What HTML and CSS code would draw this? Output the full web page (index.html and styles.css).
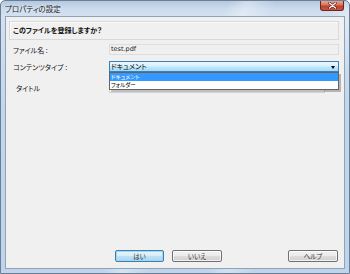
FILE: index.html
```html
<!DOCTYPE html>
<html lang="ja">
<head>
<meta charset="utf-8">
<link rel="stylesheet" href="styles.css">
</head>
<body>
<div class="window">
  <div class="titlebar">
    <span class="title">プロパティの設定</span>
    <span class="close"><svg width="9" height="7" viewBox="0 0 9 7"><path d="M1.5 1 L7.5 6 M7.5 1 L1.5 6" stroke="#5a1a10" stroke-width="2.4" stroke-linecap="round"/><path d="M1.5 1 L7.5 6 M7.5 1 L1.5 6" stroke="#ffffff" stroke-width="1.2" stroke-linecap="round"/></svg></span>
  </div>
  <div class="client">
    <div class="header">このファイルを登録しますか？</div>
    <div class="row row-file">
      <div class="label">ファイル名 :</div>
      <div class="field readonly">test.pdf</div>
    </div>
    <div class="row row-type">
      <div class="label">コンテンツタイプ :</div>
      <div class="field select">
        <span class="select-text">ドキュメント</span>
        <span class="arrow"></span>
        <div class="list">
          <div class="item selected">ドキュメント</div>
          <div class="item">フォルダー</div>
        </div>
      </div>
    </div>
    <div class="row row-title">
      <div class="label indent">タイトル</div>
      <div class="field input"></div>
    </div>
    <div class="spacer"></div>
    <div class="buttons">
      <button class="btn default">はい</button>
      <button class="btn">いいえ</button>
      <button class="btn help">ヘルプ</button>
    </div>
  </div>
</div>
</body>
</html>
```

FILE: styles.css
```css
* { box-sizing: border-box; }
html, body {
  margin: 0;
  padding: 0;
  width: 350px;
  height: 274px;
  overflow: hidden;
  background: #ffffff;
}
body {
  font-family: "Noto Sans CJK JP", "Noto Sans", sans-serif;
  font-feature-settings: "palt";
  font-size: 7px;
  color: #111;
}
.window {
  width: 350px;
  height: 274px;
  display: flex;
  flex-direction: column;
  border: 1px solid #6a7f96;
  border-radius: 5px 5px 0 0;
  background:
    linear-gradient(115deg, rgba(255,255,255,0) 0%, rgba(255,255,255,0) 48%, rgba(255,255,255,0.35) 52%, rgba(255,255,255,0) 58%, rgba(255,255,255,0) 70%, rgba(255,255,255,0.3) 74%, rgba(255,255,255,0) 80%),
    linear-gradient(to bottom, #b3c8de 0px, #cddcee 8px, #d3e1f1 16px, #c3d6eb 40%, #bfd4ea 100%);
}
.titlebar {
  height: 15px;
  display: flex;
  align-items: flex-start;
  padding-left: 4px;
  padding-right: 5px;
}
.title {
  font-size: 7.5px;
  line-height: 15px;
  color: #1a1a1a;
  text-shadow: 0 0 3px rgba(255,255,255,0.9);
}
.close {
  margin-left: auto;
  width: 24px;
  height: 10px;
  border: 1px solid #6e2418;
  border-top: none;
  border-radius: 0 0 3px 3px;
  background: linear-gradient(to bottom, #e5a593 0%, #d8735d 45%, #c0402b 55%, #c8563e 100%);
  display: flex;
  align-items: center;
  justify-content: center;
}
.close svg { display: block; }
.client {
  flex: 1;
  margin: 0 4px 4px 4px;
  border: 1px solid #8ea2b8;
  background: #f0f0f0;
  display: flex;
  flex-direction: column;
}
.header {
  margin: 4px 5px 0 3px;
  height: 19px;
  border: 1px solid #d9d9d9;
  box-shadow: inset 1px 1px 0 #fafafa;
  background: #f0f0f0;
  font-weight: bold;
  font-size: 7px;
  line-height: 17px;
  padding-left: 3px;
}
.row {
  display: flex;
  align-items: center;
  padding-left: 7px;
  padding-right: 5px;
}
.label {
  width: 96px;
  flex: none;
  line-height: 10px;
}
.label.indent { padding-left: 3px; }
.field {
  flex: 1;
  position: relative;
}
.row-file { margin-top: 4px; }
.row-type { margin-top: 6px; position: relative; z-index: 2; }
.row-title { margin-top: 11px; }
.readonly {
  height: 11px;
  border: 1px solid #dddddd;
  background: #f0f0f0;
  font-family: "DejaVu Sans", sans-serif;
  font-size: 6.5px;
  line-height: 9px;
  padding-left: 1px;
  color: #222;
}
.select {
  height: 11px;
  border: 1px solid #3c7fb1;
  background: linear-gradient(to bottom, #eaf6fd 0%, #d9f0fc 45%, #bee6fd 55%, #a7d9f5 100%);
  line-height: 9px;
  padding-left: 1px;
}
.select-text { color: #000; }
.arrow {
  position: absolute;
  right: 3px;
  top: 4px;
  width: 0;
  height: 0;
  border-left: 2.5px solid transparent;
  border-right: 2.5px solid transparent;
  border-top: 3px solid #000;
}
.list {
  position: absolute;
  left: -1px;
  right: -1px;
  top: 10px;
  height: 18px;
  border: 1px solid #646464;
  background: #ffffff;
  box-shadow: 2px 2px 0 rgba(0,0,0,0.25);
}
.item {
  height: 8px;
  line-height: 8px;
  font-size: 5.6px;
  padding-left: 1px;
  color: #000;
  overflow: hidden;
}
.item.selected {
  background: #3399ff;
  color: #ffffff;
}
.input {
  height: 10px;
  margin-right: 14px;
  border: 1px solid #cfd3d8;
  background: #ffffff;
}
.spacer { flex: 1; }
.buttons {
  display: flex;
  gap: 8px;
  padding: 0 6px 6px 109px;
}
.btn {
  width: 50px;
  height: 12px;
  padding: 0;
  margin: 0;
  border: 1px solid #707070;
  border-radius: 2px;
  background: linear-gradient(to bottom, #f2f2f2 0%, #ebebeb 50%, #dddddd 51%, #cfcfcf 100%);
  box-shadow: inset 0 0 0 1px rgba(255,255,255,0.7);
  font-family: "Noto Sans CJK JP", sans-serif;
  font-feature-settings: "palt";
  font-size: 6.5px;
  line-height: 10px;
  color: #333;
}
.btn.default {
  width: 49px;
  border-color: #3c7fb1;
  background: linear-gradient(to bottom, #e9f4fa 0%, #d7ecf8 50%, #bfe1f5 51%, #aed6ef 100%);
  box-shadow: inset 0 0 0 1px #9fd6f3;
}
.btn.help { margin-left: auto; }
```
